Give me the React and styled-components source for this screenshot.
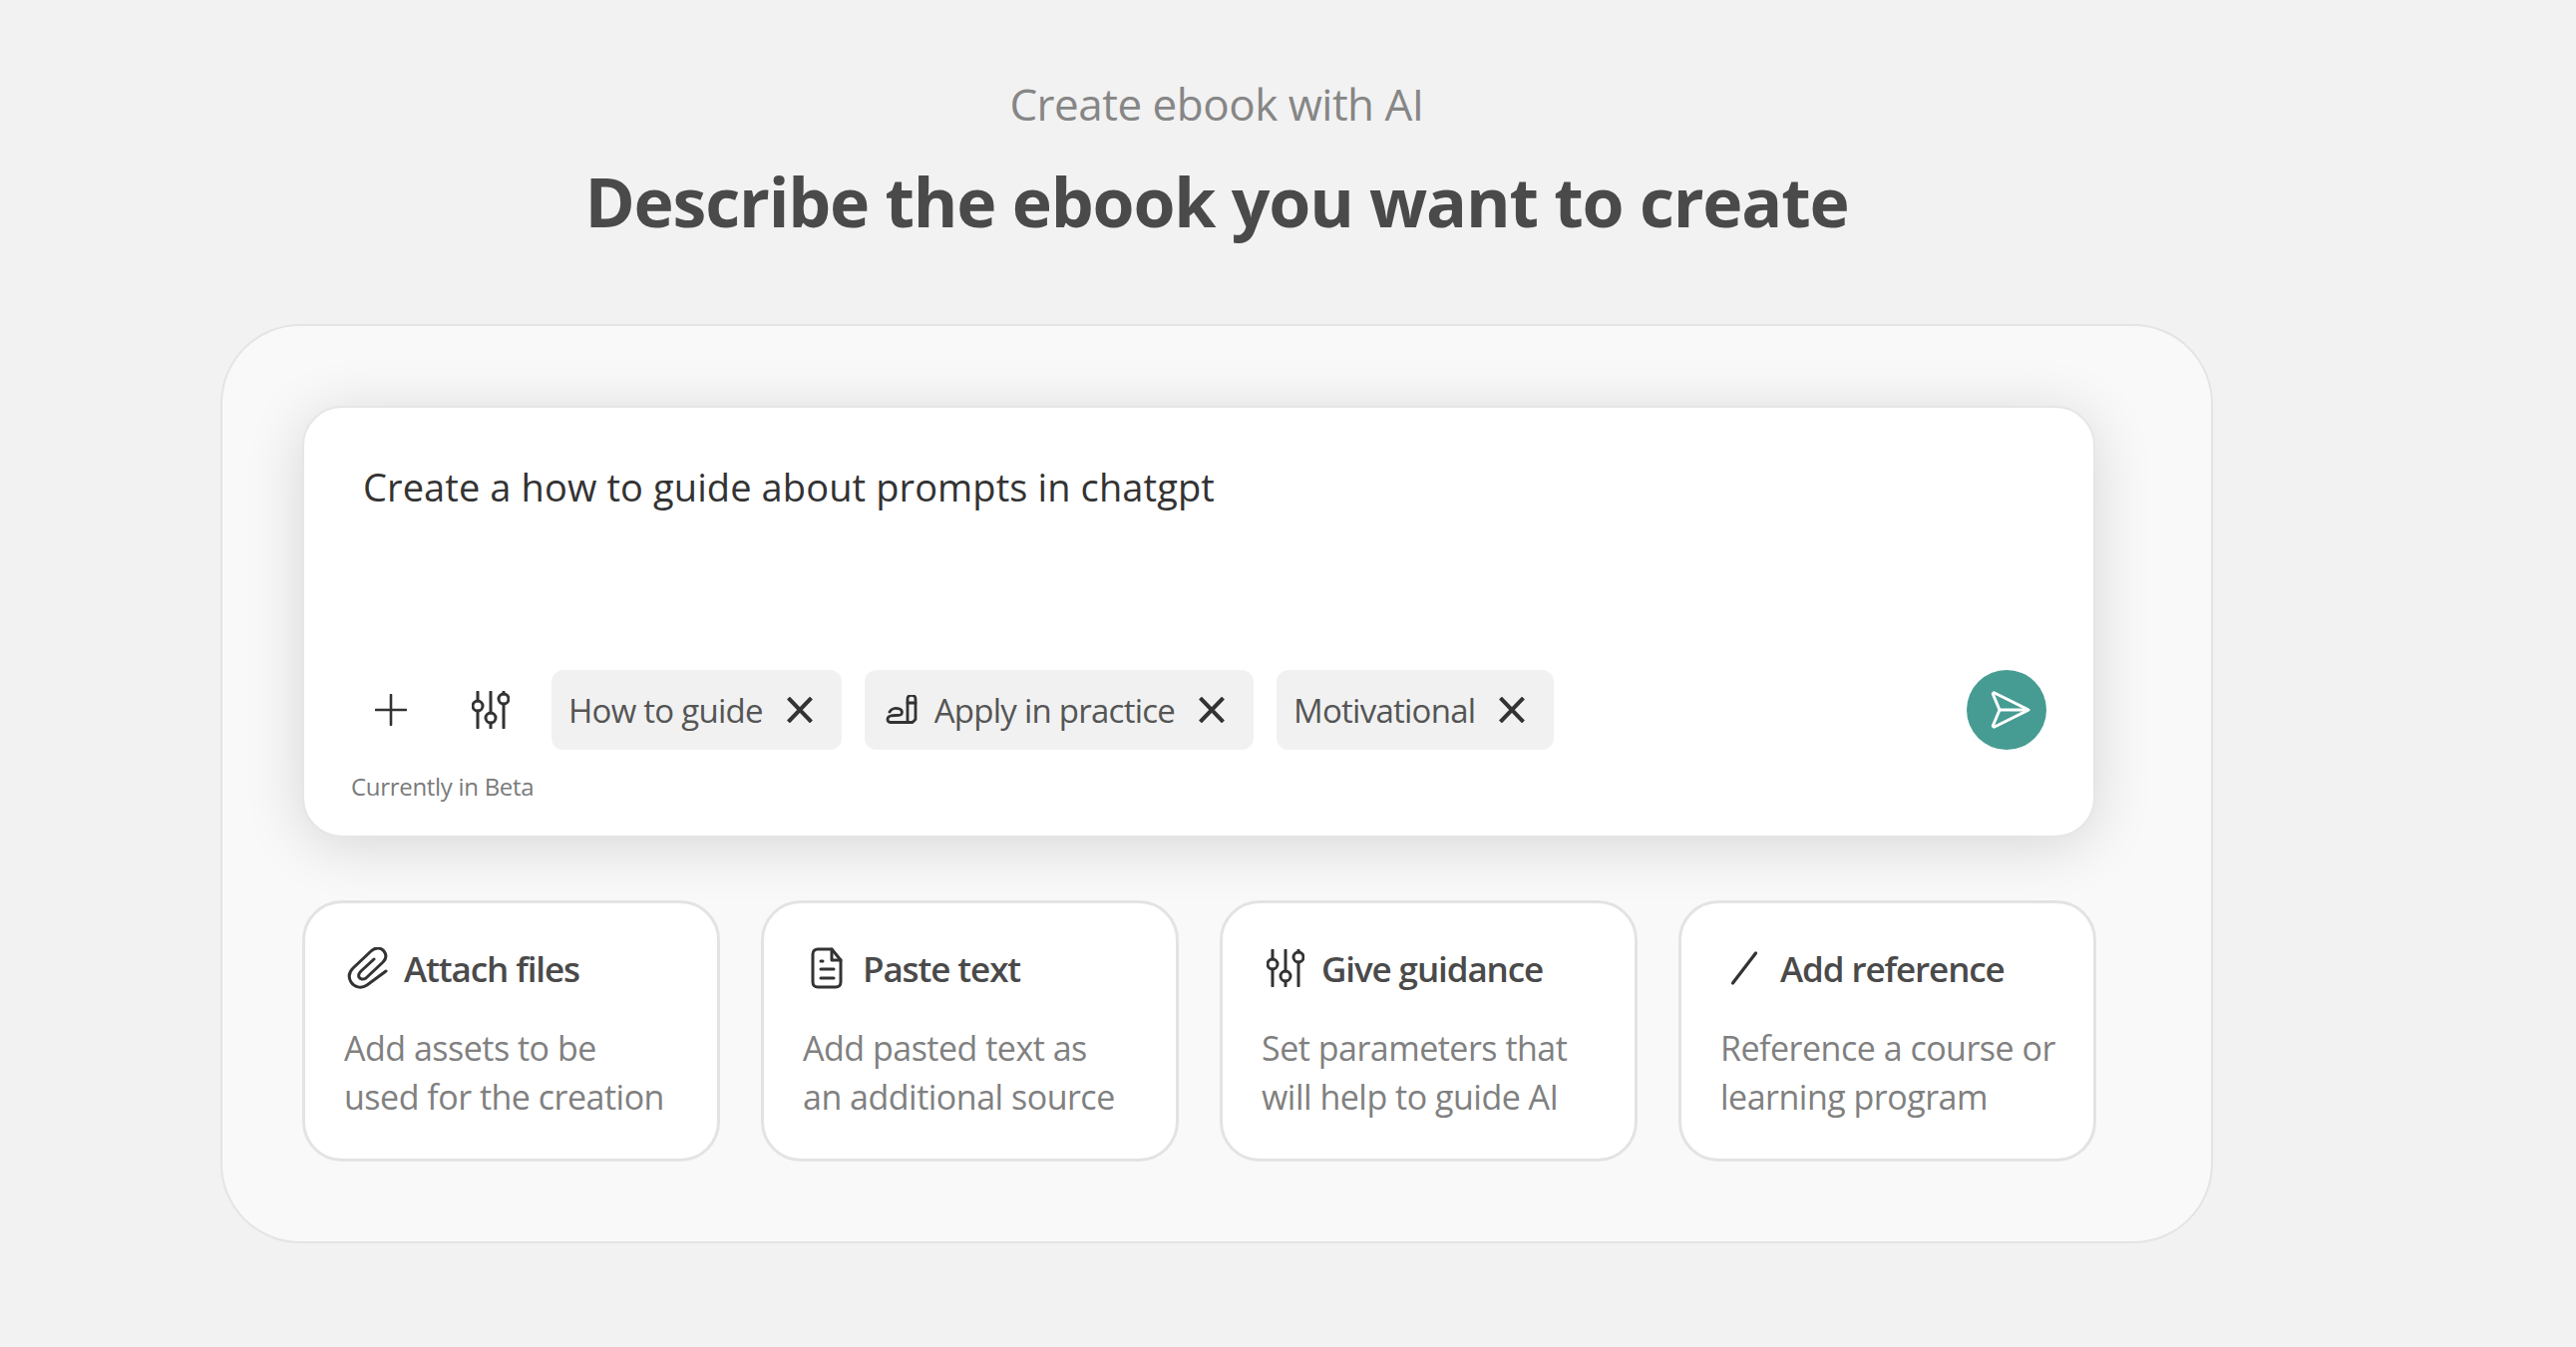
import React from "react";
import styled, { createGlobalStyle } from "styled-components";

const GlobalStyle = createGlobalStyle`
  html, body {
    margin: 0;
    padding: 0;
    background: #f2f2f2;
    font-family: "Open Sans", "Noto Sans", sans-serif;
  }
`;

const Page = styled.div`
  box-sizing: border-box;
  width: 2583px;
  height: 1351px;
  padding: 72px 364px 0 221px;
  overflow: hidden;
`;

const Header = styled.header`
  text-align: center;
`;

const Eyebrow = styled.div`
  font-size: 44px;
  line-height: 64px;
  color: #868686;
  letter-spacing: -0.5px;
`;

const Title = styled.h1`
  margin: 20px 0 0;
  font-size: 68px;
  line-height: 92px;
  font-weight: 700;
  color: #4a4a4a;
  letter-spacing: -1.2px;
`;

const Panel = styled.section`
  box-sizing: border-box;
  margin-top: 77px;
  height: 922px;
  padding: 80px 115px 0 80px;
  background: #f9f9f9;
  border: 2px solid #e4e4e4;
  border-radius: 80px;
`;

const Composer = styled.div`
  box-sizing: border-box;
  height: 433px;
  margin: 0 1px 0 0;
  padding: 52px 47px 0 59px;
  background: #fff;
  border: 2px solid #e6e6e6;
  border-radius: 40px;
  box-shadow: 0 8px 60px rgba(0, 0, 0, 0.14);
`;

const Prompt = styled.div`
  height: 211px;
  font-size: 38px;
  line-height: 54px;
  color: #333;
  letter-spacing: 0.1px;
`;

const Toolbar = styled.div`
  display: flex;
  align-items: center;
  height: 80px;
  margin-left: -22px;
`;

const ToolIcon = styled.button`
  display: flex;
  align-items: center;
  justify-content: center;
  width: 100px;
  height: 80px;
  padding: 0;
  border: 0;
  background: none;
  color: #333;
`;

const Chip = styled.div`
  display: flex;
  align-items: center;
  height: 80px;
  margin-left: ${props => (props.$first ? "11px" : "23px")};
  padding: 0 29px 0 ${props => (props.$withIcon ? "21px" : "17px")};
  background: #f1f1f1;
  border-radius: 12px;
  font-size: 33px;
  color: #555;
  letter-spacing: -0.75px;
  white-space: nowrap;
`;

const ChipLead = styled.span`
  display: flex;
  margin-right: 17px;
  color: #333;
`;

const ChipClose = styled.span`
  display: flex;
  margin-left: 24px;
  color: #333;
`;

const Send = styled.button`
  display: flex;
  align-items: center;
  justify-content: center;
  width: 80px;
  height: 80px;
  margin-left: auto;
  padding: 0 0 0 8px;
  border: 0;
  border-radius: 50%;
  background: #469c92;
`;

const BetaNote = styled.div`
  margin: 20px 0 0 -12px;
  font-size: 24px;
  line-height: 34px;
  color: #7a7a7a;
  letter-spacing: -0.3px;
`;

const Cards = styled.div`
  display: grid;
  grid-template-columns: repeat(4, 419px);
  gap: 41px;
  margin-top: 63px;
`;

const Card = styled.div`
  box-sizing: border-box;
  height: 262px;
  padding: 41px 20px 0 39px;
  background: #fff;
  border: 3px solid #e3e3e3;
  border-radius: 40px;
`;

const CardHead = styled.div`
  display: flex;
  align-items: center;
  height: 48px;
  margin-left: 1px;
  font-size: 35px;
  font-weight: 600;
  color: #4a4a4a;
  letter-spacing: -1.1px;
  white-space: nowrap;
`;

const CardIcon = styled.span`
  display: flex;
  align-items: center;
  justify-content: center;
  width: 46px;
  margin-right: 13px;
  color: #333;
`;

const CardText = styled.p`
  margin: 32px 0 0;
  font-size: 34px;
  line-height: 49px;
  color: #808080;
  letter-spacing: -0.5px;
  white-space: nowrap;
`;

const Svg = styled.svg`
  display: block;
  flex: none;
  fill: none;
  stroke: currentColor;
  stroke-linecap: round;
  stroke-linejoin: round;
`;

const PlusIcon = () => (
  <Svg width="32" height="32" viewBox="0 0 32 32" strokeWidth="2.6">
    <path d="M16 1v30M1 16h30" />
  </Svg>
);

const SlidersIcon = () => (
  <Svg width="38" height="38" viewBox="0 0 38 38" strokeWidth="3">
    <path d="M6 1v9M6 20v17M19 1v21M19 32v5M32 13v24M32 1v2" />
    <circle cx="6" cy="15" r="5" />
    <circle cx="19" cy="27" r="5" />
    <circle cx="32" cy="8" r="5" />
  </Svg>
);

const CloseIcon = () => (
  <Svg width="26" height="26" viewBox="0 0 26 26" strokeWidth="4" style={{ strokeLinecap: "butt" }}>
    <path d="M1.500 1l23 24M24.500 1l-23 24" />
  </Svg>
);

const ScrollIcon = () => (
  <Svg width="32" height="30" viewBox="0 0 32 30" strokeWidth="2.8">
    <path d="M4 17c2-4 7-4 10-3 3 1 3 5 1 6-3 1-7 0-10 1-4 1-4 6 0 6.500h22l3-3V4c0-5-8-5-8 0v23" />
    <path d="M22 8h8" />
  </Svg>
);

const ClipIcon = () => (
  <Svg width="42" height="42" viewBox="0 0 42 42" strokeWidth="3">
    <path d="M39 24 20 38c-6 4-13 2-16-3-3-5-2-10 2-14L24 4c4-4 10-4 13 0s2 8-1 11L19 31c-3 2-6 1-7-1s0-4 2-6l13-12" />
  </Svg>
);

const DocIcon = () => (
  <Svg width="32" height="42" viewBox="0 0 32 42" strokeWidth="3">
    <path d="M2 7c0-3 2-5 5-5h14l9 11v22c0 3-2 5-5 5H7c-3 0-5-2-5-5z" />
    <path d="M21 2v11h9M10 22h13M10 31h13M10 14h2" />
  </Svg>
);

const SlashIcon = () => (
  <Svg width="42" height="42" viewBox="0 0 42 42" strokeWidth="3.2">
    <path d="M9.500 36 32.500 6" />
  </Svg>
);

const SendIcon = () => (
  <svg width="40" height="38" viewBox="0 0 40 38" fill="none" stroke="#fff" strokeWidth="3" strokeLinejoin="round">
    <path d="M4 2 38 19 4 36c-1 .5-2-.5-1.500-1.500L9 19 2.500 3.500C2 2.500 3 1.500 4 2z" />
    <path d="M9 19h29" />
  </svg>
);

const actions = [
  { icon: <ClipIcon />, title: "Attach files", lines: ["Add assets to be", "used for the creation"] },
  { icon: <DocIcon />, title: "Paste text", lines: ["Add pasted text as", "an additional source"] },
  { icon: <SlidersIcon />, title: "Give guidance", lines: ["Set parameters that", "will help to guide AI"] },
  { icon: <SlashIcon />, title: "Add reference", lines: ["Reference a course or", "learning program"] }
];

const chips = [
  { label: "How to guide" },
  { label: "Apply in practice", icon: <ScrollIcon /> },
  { label: "Motivational" }
];

const App = () => (
  <Page>
    <GlobalStyle />
    <Header>
      <Eyebrow>Create ebook with AI</Eyebrow>
      <Title>Describe the ebook you want to create</Title>
    </Header>
    <Panel>
      <Composer>
        <Prompt>Create a how to guide about prompts in chatgpt</Prompt>
        <Toolbar>
          <ToolIcon><PlusIcon /></ToolIcon>
          <ToolIcon><SlidersIcon /></ToolIcon>
          {chips.map((chip, index) => (
            <Chip key={chip.label} $first={index === 0} $withIcon={Boolean(chip.icon)}>
              {chip.icon && <ChipLead>{chip.icon}</ChipLead>}
              {chip.label}
              <ChipClose><CloseIcon /></ChipClose>
            </Chip>
          ))}
          <Send><SendIcon /></Send>
        </Toolbar>
        <BetaNote>Currently in Beta</BetaNote>
      </Composer>
      <Cards>
        {actions.map(action => (
          <Card key={action.title}>
            <CardHead>
              <CardIcon>{action.icon}</CardIcon>
              {action.title}
            </CardHead>
            <CardText>
              {action.lines[0]}
              <br />
              {action.lines[1]}
            </CardText>
          </Card>
        ))}
      </Cards>
    </Panel>
  </Page>
);

export default App;
